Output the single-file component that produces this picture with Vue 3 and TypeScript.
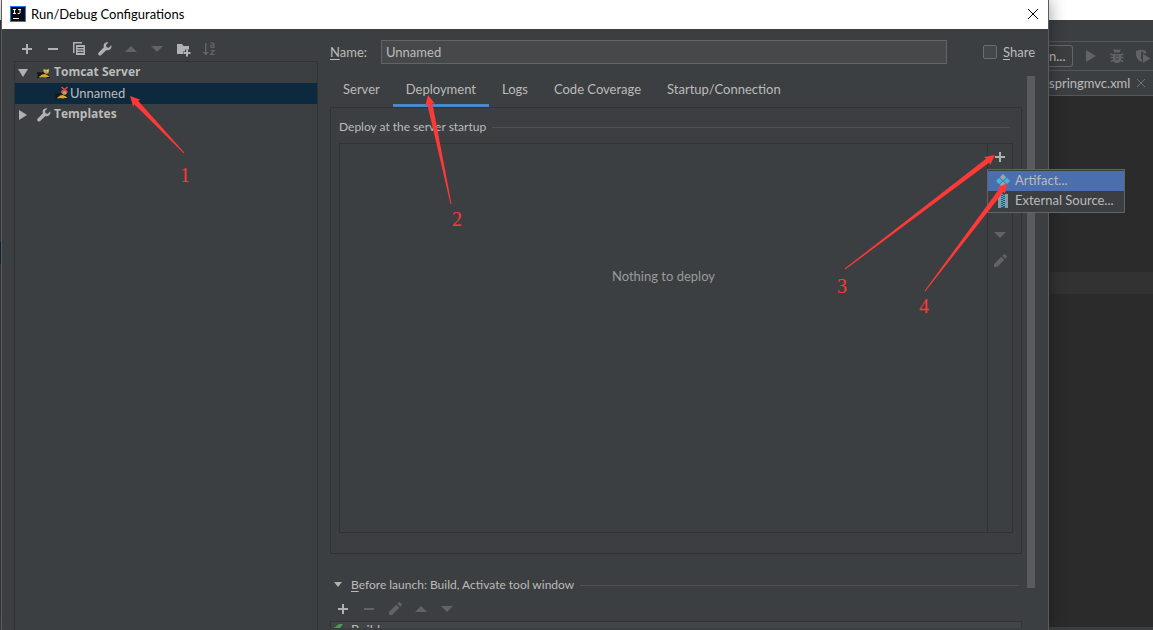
<script setup lang="ts">
import { ref } from 'vue'

interface Arrow {
  label: string
  tip: [number, number]
  tail: [number, number]
  text: [number, number]
}

const name = ref('Unnamed')
const share = ref(false)
const activeTab = ref('Deployment')
const tabs = ['Server', 'Deployment', 'Logs', 'Code Coverage', 'Startup/Connection']

const arrows: Arrow[] = [
  { label: '1', tip: [130, 96], tail: [184, 153], text: [185, 182] },
  { label: '2', tip: [428, 95], tail: [451, 204], text: [457, 226] },
  { label: '3', tip: [995, 155], tail: [845, 269], text: [842, 293] },
  { label: '4', tip: [1007, 183], tail: [925, 291], text: [924, 313] },
]

/** Tapered shaft with a notched head, pointing from tail to tip. */
function arrowPoints(a: Arrow): string {
  const dx = a.tip[0] - a.tail[0]
  const dy = a.tip[1] - a.tail[1]
  const len = Math.hypot(dx, dy)
  const ux = dx / len
  const uy = dy / len
  const at = (back: number, side: number) =>
    `${(a.tip[0] - ux * back - uy * side).toFixed(1)},${(a.tip[1] - uy * back + ux * side).toFixed(1)}`
  return [at(0, 0), at(10, 5), at(9, 2.6), at(len, 0.5), at(len, -0.5), at(9, -2.6), at(10, -5)].join(' ')
}
</script>

<template>
  <div class="desktop">
    <div class="ide-left"></div>

    <section class="dialog" role="dialog" aria-labelledby="dialog-title">
      <header class="titlebar">
        <svg class="logo" viewBox="0 0 16 16" aria-hidden="true">
          <rect width="16" height="16" fill="#1a7cf0" />
          <rect x="1" y="1" width="14" height="14" fill="#0b0b10" />
          <path d="M3 3.500h3M4.500 3.500v4M3 7.500h3M8 3.500h3M10 3.500v3.200q0 .9-1 .9H7.500M3 12.500h6" stroke="#fff" fill="none" />
        </svg>
        <h1 id="dialog-title">Run/Debug Configurations</h1>
        <button class="close" aria-label="Close">
          <svg viewBox="0 0 10 10"><path d="M0 0l10 10M10 0L0 10" stroke="#000" fill="none" /></svg>
        </button>
      </header>

      <div class="body">
        <aside class="sidebar">
          <div class="toolbar">
            <button aria-label="Add"><svg viewBox="0 0 16 16"><path d="M3 7h4V3h2v4h4v2H9v4H7V9H3z" /></svg></button>
            <button aria-label="Remove"><svg viewBox="0 0 16 16"><path d="M3 7h10v2H3z" /></svg></button>
            <button aria-label="Copy">
              <svg viewBox="0 0 16 16">
                <path d="M2 1h9v1.500H3.500V12H2z" />
                <path fill-rule="evenodd" d="M5 4h9v10H5zM6.500 6v1h6V6zM6.500 8.500v1h6v-1zM6.500 11v1h6v-1z" />
              </svg>
            </button>
            <button aria-label="Edit templates">
              <svg viewBox="0 0 16 16"><path d="M14.300 4.300l-2.500 2.400-2.300-.5-.5-2.200L11.400 1.500C9.500.8 7.500 1.800 6.800 3.600c-.3.900-.2 1.800.1 2.600L1.700 11.500c-.7.700-.7 1.800 0 2.500s1.800.7 2.500 0L9.500 8.900c2.900 1.200 5.700-1.600 4.800-4.600z" /></svg>
            </button>
            <button class="off" aria-label="Move up"><svg viewBox="0 0 16 16"><path d="M2 11l6-6 6 6z" /></svg></button>
            <button class="off" aria-label="Move down"><svg viewBox="0 0 16 16"><path d="M2 5l6 6 6-6z" /></svg></button>
            <button aria-label="New folder">
              <svg viewBox="0 0 16 16">
                <path d="M2 3h5l1.500 2H14v3.500h-4v2H8V13H2z" />
                <path d="M11 8.500h2V11h2.500v2H13v2.500h-2V13H8.500v-2H11z" />
              </svg>
            </button>
            <button class="off" aria-label="Sort">
              <svg viewBox="0 0 16 16">
                <path d="M4 2h1.500v9H8l-3.200 3.300L1.500 11H4z" />
                <path d="M9.500 2.200H12q1 0 1 1v3.300M13 4.200h-2.500q-1 0-1 1.100t1 1.100H13M9.500 9.700h3.700L9.700 13.300h3.800" fill="none" stroke="#616365" stroke-width="1.300" />
              </svg>
            </button>
          </div>

          <ul class="tree" role="tree">
            <li class="row group" role="treeitem" aria-expanded="true">
              <svg class="twisty" viewBox="0 0 10 10"><path d="M0 1h10L5 9z" /></svg>
              <svg class="ico" viewBox="0 0 16 16">
                <path d="M1 7l3 .5L7 7l3 2 3 1v1H5L2 12z" fill="#171717" />
                <path d="M3 12l3-2.500 3-.5 3 1.500 2 2-3-.5-2 .5-3-.4-2 .4z" fill="#d9a92c" />
                <path d="M7.500 3.500l1.500 1h2.500l1.500-1V7l-1.500 1.800H9.500L7.500 7z" fill="#c4a24c" />
                <path d="M8.500 5.800h1M11 5.800h1" stroke="#eee" />
                <path d="M1 7.500l2.500.7M3 12.500H1M11 12.500h3" stroke="#171717" />
              </svg>
              <span>Tomcat Server</span>
            </li>
            <li class="row leaf selected" role="treeitem" aria-selected="true">
              <svg class="ico" viewBox="0 0 16 16">
                <path d="M1 7l3 .5L7 7l3 2 3 1v1H5L2 12z" fill="#171717" />
                <path d="M3 12l3-2.500 3-.5 3 1.500 2 2-3-.5-2 .5-3-.4-2 .4z" fill="#d9a92c" />
                <path d="M7.500 4.500H13V7l-1.500 1.800H9.500L7.500 7z" fill="#c4a24c" />
                <path d="M1 7.500l2.500.7M3 12.500H1M11 12.500h3" stroke="#171717" />
                <path d="M7.500 1l6 5.500M13.500 1l-6 5.500" stroke="#e5484f" stroke-width="1.600" />
              </svg>
              <span>Unnamed</span>
            </li>
            <li class="row group" role="treeitem" aria-expanded="false">
              <svg class="twisty" viewBox="0 0 10 10"><path d="M1 0v10l8-5z" /></svg>
              <svg class="ico" viewBox="0 0 16 16"><path fill="#afb1b3" d="M14.300 4.300l-2.500 2.400-2.300-.5-.5-2.200L11.400 1.500C9.500.8 7.500 1.800 6.800 3.600c-.3.900-.2 1.800.1 2.600L1.700 11.500c-.7.700-.7 1.800 0 2.500s1.800.7 2.500 0L9.500 8.900c2.900 1.200 5.700-1.600 4.800-4.600z" /></svg>
              <span>Templates</span>
            </li>
          </ul>
        </aside>

        <main class="main">
          <div class="name-row">
            <label class="name-label" for="cfg-name"><u>N</u>ame:</label>
            <input id="cfg-name" v-model="name" class="name-input" type="text" />
            <label class="share"><input v-model="share" type="checkbox" /><span><u>S</u>hare</span></label>
          </div>

          <div class="scroll-row">
            <div class="content">
              <div class="tabs" role="tablist">
                <button
                  v-for="tab in tabs"
                  :key="tab"
                  role="tab"
                  :class="{ active: tab === activeTab }"
                  :aria-selected="tab === activeTab"
                  @click="activeTab = tab"
                >{{ tab }}</button>
              </div>

              <div class="panel">
                <h2 class="rule-heading">Deploy at the server startup</h2>
                <div class="deploy">
                  <p class="empty">Nothing to deploy</p>
                  <div class="side-tools">
                    <button aria-label="Add deployment"><svg viewBox="0 0 16 16"><path d="M3 7h4V3h2v4h4v2H9v4H7V9H3z" /></svg></button>
                    <button class="off" aria-label="Remove deployment"><svg viewBox="0 0 16 16"><path d="M3 7h10v2H3z" /></svg></button>
                    <button class="off" aria-label="Move deployment up"><svg viewBox="0 0 16 16"><path d="M2 11l6-6 6 6z" /></svg></button>
                    <button class="off" aria-label="Move deployment down"><svg viewBox="0 0 16 16"><path d="M2 5l6 6 6-6z" /></svg></button>
                    <button class="off" aria-label="Edit deployment"><svg viewBox="0 0 16 16"><path d="M2 11l7.300-7.300 3 3L5 14H2zM10.300 2.700l1.200-1.200q.7-.7 1.400 0l1.600 1.600q.7.700 0 1.400l-1.200 1.200z" /></svg></button>
                    <div class="menu" role="menu">
                      <button class="hot" role="menuitem">
                        <svg viewBox="0 0 16 16">
                          <path d="M8 1l3.200 3.200L8 7.400 4.800 4.200zM8 8.600l3.200 3.200L8 15l-3.200-3.200z" fill="#9aa7b0" />
                          <path d="M4.200 4.800L7.400 8l-3.200 3.200L1 8zM11.800 4.800L15 8l-3.200 3.200L8.600 8z" fill="#40b6e0" />
                        </svg>
                        <span>Artifact...</span>
                      </button>
                      <button role="menuitem">
                        <svg viewBox="0 0 16 16">
                          <path d="M3 1h3v14H3zM10 1h3v14h-3z" fill="#8b989f" />
                          <path d="M6 1h4v14H6z" fill="#24566b" />
                          <path d="M6 1.500h2M8 2.500h2M6 3.500h2M8 4.500h2M6 5.500h2M8 6.500h2M6 7.500h2M8 8.500h2M6 9.500h2M8 10.500h2M6 11.500h2M8 12.500h2M6 13.500h2" stroke="#40b6e0" />
                        </svg>
                        <span>External Source...</span>
                      </button>
                    </div>
                  </div>
                </div>
              </div>

              <h2 class="rule-heading before">
                <svg class="mini" viewBox="0 0 8 6"><path d="M0 0h8L4 5z" /></svg>
                <span><u>B</u>efore launch: Build, Activate tool window</span>
              </h2>
              <div class="toolbar tasks">
                <button aria-label="Add task"><svg viewBox="0 0 16 16"><path d="M3 7h4V3h2v4h4v2H9v4H7V9H3z" /></svg></button>
                <button class="off" aria-label="Remove task"><svg viewBox="0 0 16 16"><path d="M3 7h10v2H3z" /></svg></button>
                <button class="off" aria-label="Edit task"><svg viewBox="0 0 16 16"><path d="M2 11l7.300-7.300 3 3L5 14H2zM10.300 2.700l1.200-1.200q.7-.7 1.400 0l1.600 1.600q.7.700 0 1.400l-1.200 1.200z" /></svg></button>
                <button class="off" aria-label="Move task up"><svg viewBox="0 0 16 16"><path d="M2 11l6-6 6 6z" /></svg></button>
                <button class="off" aria-label="Move task down"><svg viewBox="0 0 16 16"><path d="M2 5l6 6 6-6z" /></svg></button>
              </div>
              <div class="task-list">
                <svg viewBox="0 0 16 16"><path d="M1 6l5-4h4L7 6l3 3-3 3z" fill="#499c54" /></svg>
                <span>Build</span>
              </div>
            </div>
            <div class="scrollbar"></div>
          </div>
        </main>
      </div>
    </section>

    <div class="ide-right">
      <div class="ide-title"></div>
      <div class="ide-nav"></div>
      <div class="ide-tools">
        <button class="combo">n...</button>
        <svg viewBox="0 0 16 16"><path d="M3 2l10 6-10 6z" /></svg>
        <svg viewBox="0 0 16 16">
          <path d="M5 4.500a3 3 0 0 1 6 0zM4 6h8v5a4 4 0 0 1-8 0z" />
          <path d="M4.500 1.500l2 2M11.500 1.500l-2 2M1.500 6l3 1M14.500 6l-3 1M1.500 9.500h13M2 13.500l3-1.500M14 13.500L11 12" fill="none" stroke="#616365" stroke-width="1.500" />
          <path d="M6 8h4M6 11h4" stroke="#3c3f41" />
        </svg>
        <svg viewBox="0 0 16 16">
          <path d="M1 3l5-1.500L11 3v2.500H8.500V4L6 3.500V11l1 1v2C3 12.500 1 10 1 6z" />
          <path d="M8 6l7.500 4.500L8 15z" />
        </svg>
      </div>
      <div class="ide-tab">
        <span>springmvc.xml</span>
        <svg viewBox="0 0 8 8"><path d="M0 0l8 8M8 0L0 8" stroke="#6e7173" fill="none" /></svg>
      </div>
      <div class="editor"><div class="caret-line"></div></div>
    </div>

    <svg class="notes" aria-hidden="true">
      <g v-for="a in arrows" :key="a.label">
        <polygon :points="arrowPoints(a)" />
        <text :x="a.text[0]" :y="a.text[1]" text-anchor="middle">{{ a.label }}</text>
      </g>
    </svg>
  </div>
</template>

<style>
html,
body {
  background: #2b2b2b;
  overflow: hidden;
}
</style>

<style scoped>
* {
  box-sizing: border-box;
}
.desktop {
  position: relative;
  display: grid;
  grid-template-columns: 1px minmax(0, 1fr) 104px;
  height: 100vh;
  overflow: hidden;
  font: 13px/20px Lato, "Open Sans", sans-serif;
  color: #bbbbbb;
}
h1,
h2,
p,
ul {
  margin: 0;
  padding: 0;
  font-weight: 400;
  font-size: 13px;
  list-style: none;
}
button {
  border: 0;
  padding: 0;
  background: none;
  color: inherit;
  font: inherit;
}
svg {
  display: block;
  flex: none;
  fill: #afb1b3;
}
u {
  text-underline-offset: 2px;
}

.ide-left {
  background: linear-gradient(#fff 20px, #3c3f41 20px, #3c3f41 242px, #0d293e 242px, #0d293e 264px, #3c3f41 264px);
}

/* dialog window */
.dialog {
  position: relative;
  z-index: 1;
  display: flex;
  flex-direction: column;
  min-height: 0;
  border: solid #5a5c5d;
  border-width: 0 1px;
  background: #3c3f41;
  box-shadow: 0 0 16px rgba(0, 0, 0, 0.4);
}
.titlebar {
  display: flex;
  align-items: center;
  height: 29px;
  padding: 0 10px 2px 8px;
  background: #fff;
  color: #000;
}
.logo {
  width: 16px;
  height: 16px;
  margin-right: 5px;
}
.titlebar h1 {
  flex: 1;
}
.close svg {
  width: 10px;
  height: 10px;
}
.body {
  flex: 1;
  display: flex;
  min-height: 0;
}

.toolbar {
  display: flex;
  gap: 10px;
}
.toolbar svg,
.side-tools svg,
.ide-tools svg {
  width: 16px;
  height: 16px;
}
.off svg {
  fill: #616365;
}

.sidebar {
  flex: none;
  width: 316px;
  padding-left: 12px;
  display: flex;
  flex-direction: column;
}
.sidebar .toolbar {
  padding: 12px 5px 4px;
}
.tree {
  flex: 1;
  border: 1px solid #323232;
  border-bottom: 0;
}
.row {
  display: flex;
  align-items: center;
  height: 21px;
}
.row span,
.menu span {
  padding-bottom: 2px;
}
.group {
  padding-left: 3px;
  font-family: "Open Sans", sans-serif;
  font-size: 12px;
  font-weight: 700;
}
.leaf {
  padding-left: 39px;
}
.selected {
  background: #0d293e;
}
.twisty {
  width: 10px;
  height: 10px;
  margin-right: 8px;
}
.ico {
  width: 16px;
  height: 16px;
}
.group .ico {
  margin-right: 2px;
}

.main {
  flex: 1;
  min-width: 0;
  display: flex;
  flex-direction: column;
  padding: 11px 12px 2px;
}
.name-row {
  display: flex;
  align-items: center;
  height: 36px;
  padding-bottom: 12px;
}
.name-label {
  width: 51px;
}
.name-input {
  flex: 1;
  min-width: 0;
  height: 24px;
  padding: 0 4px;
  border: 1px solid #646464;
  background: #45494a;
  color: #bbbbbb;
  font: inherit;
  outline: 0;
}
.share {
  display: flex;
  align-items: center;
  gap: 6px;
  width: 53px;
  margin-left: 36px;
  white-space: nowrap;
}
.share input {
  appearance: none;
  flex: none;
  width: 14px;
  height: 14px;
  margin: 0;
  border: 1px solid #6b6b6b;
  border-radius: 2px;
  background: #43494a;
}

.scroll-row {
  flex: 1;
  display: flex;
  gap: 5px;
  min-height: 0;
}
.content {
  flex: 1;
  min-width: 0;
  display: flex;
  flex-direction: column;
}
.scrollbar {
  width: 8px;
  margin: 0 1px 40px 0;
  background: #595b5d;
}
.tabs {
  display: flex;
  height: 31px;
}
.tabs button {
  padding: 0 13px 2px;
  border: solid transparent;
  border-width: 0 0 3px;
}
.tabs .active {
  border-color: #4a88c7;
}

.panel {
  flex: 1;
  display: flex;
  flex-direction: column;
  min-height: 0;
  padding: 9px 8px 20px;
  border: 1px solid #323232;
}
.rule-heading {
  display: flex;
  align-items: center;
  gap: 6px;
  height: 20px;
  padding-right: 3px;
  font-size: 12px;
  white-space: nowrap;
}
.rule-heading::after {
  content: "";
  flex: 1;
  height: 1px;
  background: #515151;
}
.deploy {
  flex: 1;
  display: flex;
  margin-top: 6px;
  border: 1px solid #323232;
}
.empty {
  flex: 1;
  padding-top: 122px;
  text-align: center;
  color: #999b9c;
}
.side-tools {
  position: relative;
  display: flex;
  flex-direction: column;
  align-items: center;
  gap: 10px;
  width: 25px;
  padding-top: 5px;
  border-left: 1px solid #323232;
}
.menu {
  position: absolute;
  z-index: 2;
  top: 25px;
  left: -1px;
  width: 138px;
  padding: 1px 0;
  border: 1px solid #616365;
  background: #3c3f41;
}
.menu button {
  display: flex;
  align-items: center;
  gap: 4px;
  width: 100%;
  height: 20px;
  padding-left: 7px;
  white-space: nowrap;
}
.menu .hot {
  background: #4b6eaf;
}

.before {
  margin-top: 21px;
  padding-left: 4px;
}
.before .mini {
  width: 8px;
  height: 6px;
  margin-right: 3px;
}
.tasks {
  padding: 6px 5px 4px;
}
.task-list {
  display: flex;
  gap: 2px;
  height: 7px;
  overflow: hidden;
  padding-left: 2px;
  border: 1px solid #323232;
  border-bottom: 0;
  background: #414547;
  line-height: 16px;
}
.task-list svg {
  width: 16px;
  height: 16px;
}

/* IDE window behind the dialog */
.ide-right {
  display: flex;
  flex-direction: column;
  min-height: 0;
}
.ide-title {
  height: 20px;
  background: #fff;
}
.ide-nav {
  height: 22px;
  border-bottom: 1px solid #555758;
  background: #3c3f41;
}
.ide-tools {
  display: flex;
  align-items: center;
  gap: 10px;
  height: 29px;
  border-bottom: 1px solid #555758;
  background: #3c3f41;
}
.ide-tools svg {
  fill: #616365;
}
.combo {
  width: 24px;
  height: 22px;
  border: 1px solid #646769;
  border-left: 0;
  border-radius: 0 3px 3px 0;
  text-align: left;
  line-height: 18px;
}
.ide-tab {
  display: flex;
  align-items: center;
  gap: 7px;
  height: 25px;
  border-bottom: 1px solid #555758;
  background: #3c3f41;
}
.ide-tab svg {
  width: 8px;
  height: 8px;
}
.editor {
  flex: 1;
  padding-top: 176px;
  border-bottom: 3px solid #3c3f41;
}
.caret-line {
  height: 22px;
  background: #323232;
}

.notes {
  position: absolute;
  z-index: 3;
  inset: 0;
  width: 100%;
  height: 100%;
  fill: #ff3838;
  pointer-events: none;
  font: 20px "Liberation Serif", serif;
}
</style>
